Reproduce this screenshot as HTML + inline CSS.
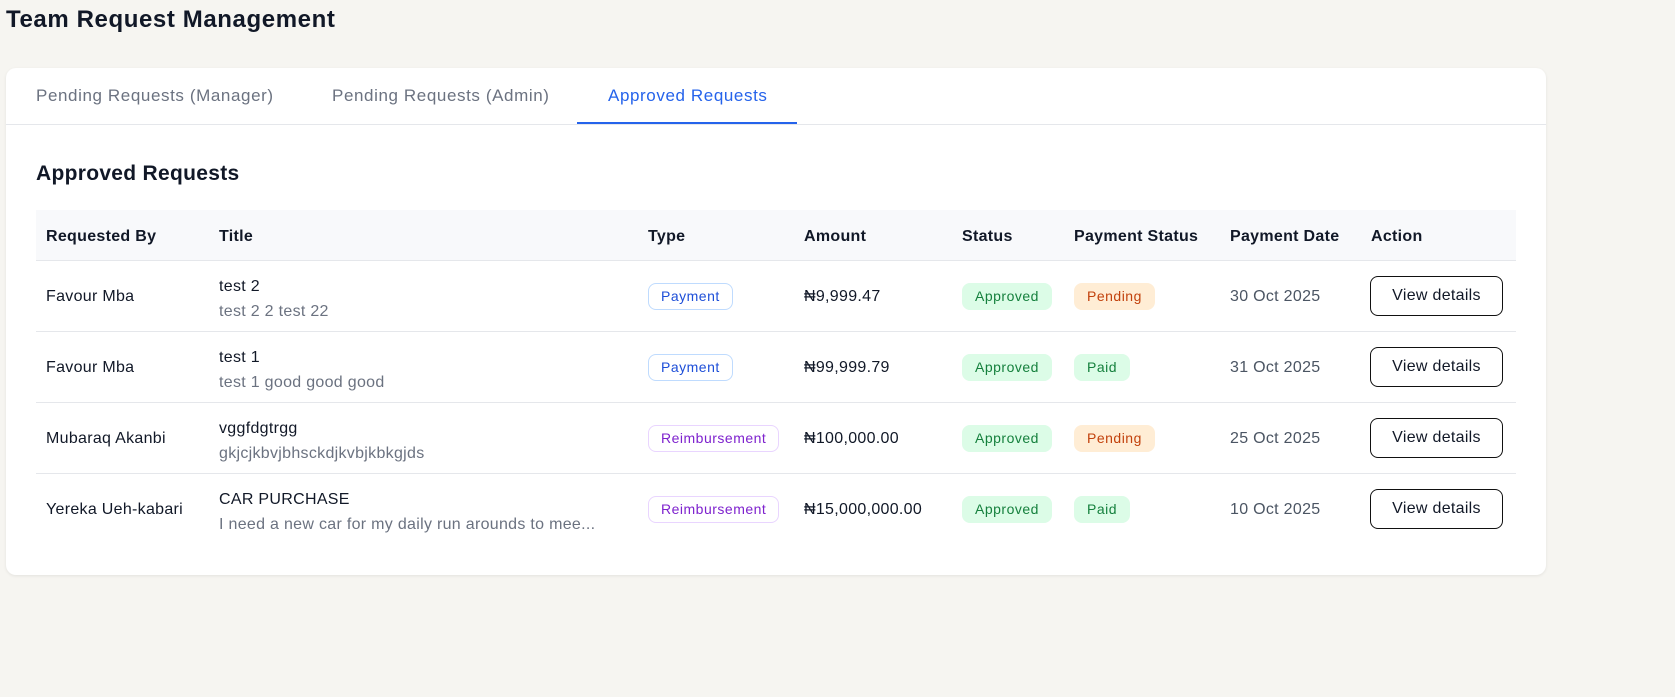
<!DOCTYPE html>
<html><head><meta charset="utf-8"><style>
*{box-sizing:border-box;margin:0;padding:0}
body{width:1675px;height:697px;background:#f6f5f1;font-family:"Liberation Sans",sans-serif;color:#111827;position:relative;overflow:hidden;letter-spacing:0.3px}
h1{position:absolute;left:6px;top:6px;font-size:24px;font-weight:700;color:#111827;letter-spacing:0.6px}
.card{position:absolute;left:6px;top:68px;width:1540px;height:507px;background:#fff;border-radius:10px;box-shadow:0 1px 3px rgba(0,0,0,.08)}
.tabs{position:absolute;left:0;top:0;right:0;height:57px;border-bottom:1px solid #e5e7eb}
.tab{position:absolute;top:18px;font-size:17px;color:#6b7280;letter-spacing:0.6px}
.tab.a{color:#2563eb}
.ul{position:absolute;left:571px;width:220px;top:54px;height:2px;background:#2563eb}
h2{position:absolute;left:30px;top:94px;font-size:21px;font-weight:700;letter-spacing:0.3px}
.thead{position:absolute;left:30px;top:142px;width:1480px;height:51px;background:#f8f9fb;border-bottom:1px solid #e5e7eb}
.c{position:absolute;font-size:16px}
.th{font-weight:700;top:18px}
.row{position:absolute;left:30px;width:1480px;height:71px;border-bottom:1px solid #e5e7eb}
.row.last{border-bottom:none}
.t1{top:17px}.t2{top:42px;color:#6b7280}
.mid{top:27px}
.badge{position:absolute;top:22px;height:27px;border-radius:8px;font-size:14px;line-height:25px;padding:0 12px;letter-spacing:0.5px}
.pay{border:1px solid #bfdbfe;color:#1d4ed8}
.reim{border:1px solid #e9d5ff;color:#7e22ce}
.ok{background:#dcfce7;color:#15803d;border:1px solid #dcfce7}
.pend{background:#ffedd5;color:#c2410c;border:1px solid #ffedd5}
.btn{position:absolute;left:1334px;top:15px;width:133px;height:40px;border:1.3px solid #111;border-radius:8px;font-size:16px;text-align:center;line-height:37px}
.g{color:#4b5563}
</style></head><body>
<h1>Team Request Management</h1>
<div class="card">
<div class="tabs">
<div class="tab" style="left:30px">Pending Requests (Manager)</div>
<div class="tab" style="left:326px">Pending Requests (Admin)</div>
<div class="tab a" style="left:602px">Approved Requests</div>
<div class="ul"></div>
</div>
<h2>Approved Requests</h2>
<div class="thead">
<div class="c th" style="left:10px">Requested By</div>
<div class="c th" style="left:183px">Title</div>
<div class="c th" style="left:612px">Type</div>
<div class="c th" style="left:768px">Amount</div>
<div class="c th" style="left:926px">Status</div>
<div class="c th" style="left:1038px">Payment Status</div>
<div class="c th" style="left:1194px">Payment Date</div>
<div class="c th" style="left:1335px">Action</div>
</div>

<div class="row" style="top:193px">
<div class="c mid" style="left:10px">Favour Mba</div>
<div class="c t1" style="left:183px">test 2</div><div class="c t2" style="left:183px">test 2 2 test 22</div>
<div class="badge pay" style="left:612px">Payment</div>
<div class="c mid" style="left:768px">₦9,999.47</div>
<div class="badge ok" style="left:926px">Approved</div>
<div class="badge pend" style="left:1038px">Pending</div>
<div class="c mid g" style="left:1194px">30 Oct 2025</div>
<div class="btn">View details</div>
</div>
<div class="row" style="top:264px">
<div class="c mid" style="left:10px">Favour Mba</div>
<div class="c t1" style="left:183px">test 1</div><div class="c t2" style="left:183px">test 1 good good good</div>
<div class="badge pay" style="left:612px">Payment</div>
<div class="c mid" style="left:768px">₦99,999.79</div>
<div class="badge ok" style="left:926px">Approved</div>
<div class="badge ok" style="left:1038px">Paid</div>
<div class="c mid g" style="left:1194px">31 Oct 2025</div>
<div class="btn">View details</div>
</div>
<div class="row" style="top:335px">
<div class="c mid" style="left:10px">Mubaraq Akanbi</div>
<div class="c t1" style="left:183px">vggfdgtrgg</div><div class="c t2" style="left:183px">gkjcjkbvjbhsckdjkvbjkbkgjds</div>
<div class="badge reim" style="left:612px">Reimbursement</div>
<div class="c mid" style="left:768px">₦100,000.00</div>
<div class="badge ok" style="left:926px">Approved</div>
<div class="badge pend" style="left:1038px">Pending</div>
<div class="c mid g" style="left:1194px">25 Oct 2025</div>
<div class="btn">View details</div>
</div>
<div class="row last" style="top:406px">
<div class="c mid" style="left:10px">Yereka Ueh-kabari</div>
<div class="c t1" style="left:183px">CAR PURCHASE</div><div class="c t2" style="left:183px">I need a new car for my daily run arounds to mee...</div>
<div class="badge reim" style="left:612px">Reimbursement</div>
<div class="c mid" style="left:768px">₦15,000,000.00</div>
<div class="badge ok" style="left:926px">Approved</div>
<div class="badge ok" style="left:1038px">Paid</div>
<div class="c mid g" style="left:1194px">10 Oct 2025</div>
<div class="btn">View details</div>
</div>
</div>
</body></html>
